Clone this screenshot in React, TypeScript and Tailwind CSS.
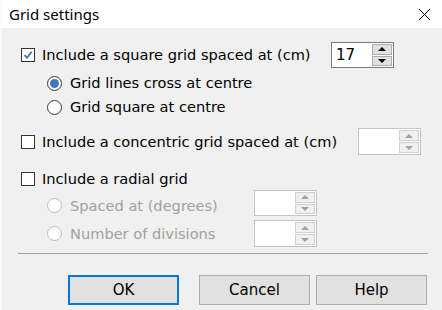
import React from "react";

const font = { fontFamily: '"DejaVu Sans", Verdana, sans-serif' };

function Check({ checked }: { checked?: boolean }) {
  return (
    <div className="w-[14px] h-[14px] border border-[#333333] bg-white flex items-center justify-center shrink-0">
      {checked && (
        <svg width="10" height="10" viewBox="0 0 10 10">
          <path d="M1.5 5.2 L4 7.8 L8.6 1.8" fill="none" stroke="#3a6fb0" strokeWidth="1.7" />
        </svg>
      )}
    </div>
  );
}

function Radio({ checked, disabled }: { checked?: boolean; disabled?: boolean }) {
  return (
    <div
      className={`w-[15px] h-[15px] rounded-full border bg-white flex items-center justify-center shrink-0 ${
        disabled ? "border-[#bcbcbc]" : "border-[#333333]"
      }`}
    >
      {checked && <div className="w-[9px] h-[9px] rounded-full bg-[#3d78c2]" />}
    </div>
  );
}

function Spin({ value, disabled, h }: { value?: string; disabled?: boolean; h: string }) {
  const arrow = disabled ? "#a0a0a0" : "#000000";
  return (
    <div className={`flex w-[63px] ${h} border ${disabled ? "border-[#c5c5c5]" : "border-[#7a7a7a]"} bg-white shrink-0`}>
      <div className="flex-1 flex items-center pl-[4px] text-[15px] text-black">{value}</div>
      <div className="w-[21px] flex flex-col gap-[1px] p-[1px] pl-0">
        <div className={`flex-1 border ${disabled ? "border-[#d0d0d0] bg-[#f0f0f0]" : "border-[#adadad] bg-[#e1e1e1]"} flex items-center justify-center`}>
          <svg width="8" height="4" viewBox="0 0 8 4">
            <path d="M0 4 L4 0 L8 4 Z" fill={arrow} />
          </svg>
        </div>
        <div className={`flex-1 border ${disabled ? "border-[#d0d0d0] bg-[#f0f0f0]" : "border-[#adadad] bg-[#e1e1e1]"} flex items-center justify-center`}>
          <svg width="8" height="4" viewBox="0 0 8 4">
            <path d="M0 0 L8 0 L4 4 Z" fill={arrow} />
          </svg>
        </div>
      </div>
    </div>
  );
}

export default function App() {
  return (
    <div className="w-[442px] h-[310px] flex bg-white overflow-hidden" style={font}>
      <div className="w-[2px] bg-[#fbfbfb]" />
      <div className="flex-1 flex flex-col">
        <div className="h-[28px] bg-white flex items-center justify-between pl-[7px] pr-[11px]">
          <span className="text-[15px] text-black" style={{ fontFamily: '"Noto Sans", "Open Sans", sans-serif' }}>
            Grid settings
          </span>
          <svg width="13" height="13" viewBox="0 0 13 13">
            <path d="M1 1 L12 12 M12 1 L1 12" stroke="#000" strokeWidth="1" />
          </svg>
        </div>
        <div className="flex-1 bg-[#f0f0f0] flex flex-col pl-[19px] pr-[13px] text-[14.6px] text-black">
          <div className="mt-[14px] h-[26px] flex items-center">
            <Check checked />
            <span className="ml-[7px] w-[289px] whitespace-nowrap">Include a square grid spaced at (cm)</span>
            <Spin value="17" h="h-[26px]" />
          </div>
          <div className="mt-[3px] h-[24px] flex items-center pl-[26px]">
            <Radio checked />
            <span className="ml-[8px]">Grid lines cross at centre</span>
          </div>
          <div className="h-[24px] flex items-center pl-[26px]">
            <Radio />
            <span className="ml-[8px]">Grid square at centre</span>
          </div>
          <div className="mt-[9px] h-[27px] flex items-center">
            <Check />
            <span className="ml-[7px] w-[316px] whitespace-nowrap">Include a concentric grid spaced at (cm)</span>
            <Spin disabled h="h-[27px]" />
          </div>
          <div className="mt-[14px] h-[20px] flex items-center">
            <Check />
            <span className="ml-[7px]">Include a radial grid</span>
          </div>
          <div className="mt-[1px] h-[26px] flex items-center pl-[26px] text-[#a0a0a0]">
            <div className="flex items-center w-[207px] pt-[5px]">
              <Radio disabled />
              <span className="ml-[8px]">Spaced at (degrees)</span>
            </div>
            <Spin disabled h="h-[26px]" />
          </div>
          <div className="mt-[4px] h-[27px] flex items-center pl-[26px] text-[#a0a0a0]">
            <div className="flex items-center w-[207px]">
              <Radio disabled />
              <span className="ml-[8px]">Number of divisions</span>
            </div>
            <Spin disabled h="h-[27px]" />
          </div>
          <div className="mt-[6px] h-[1px] bg-[#a0a0a0] ml-[-3px] w-[410px]" />
          <div className="mt-[21px] h-[30px] flex pl-[47px] text-[15px]">
            <div className="w-[111px] h-[30px] border-2 border-[#0078d7] bg-[#e1e1e1] flex items-center justify-center">
              OK
            </div>
            <div className="ml-[20px] w-[111px] h-[30px] border border-[#adadad] bg-[#e1e1e1] flex items-center justify-center">
              Cancel
            </div>
            <div className="ml-[6px] w-[111px] h-[30px] border border-[#adadad] bg-[#e1e1e1] flex items-center justify-center">
              Help
            </div>
          </div>
        </div>
      </div>
    </div>
  );
}
